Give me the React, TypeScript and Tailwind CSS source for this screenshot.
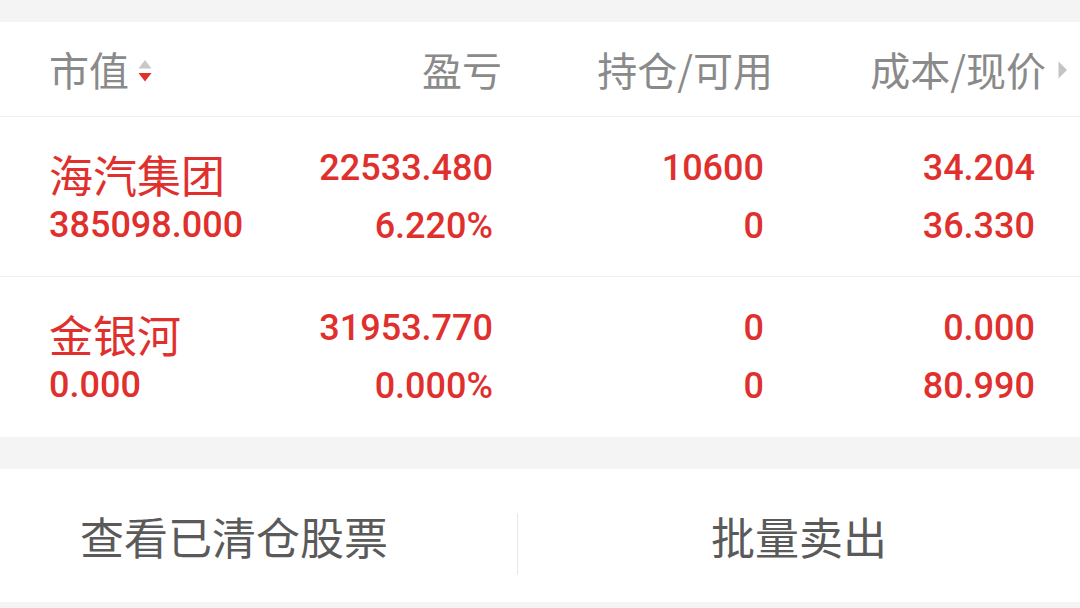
const CJK = "font-['Noto_Sans_CJK_SC',sans-serif]";
const NUM = "font-['Roboto','Noto_Sans_CJK_SC',sans-serif] text-[36px] font-medium";

type Holding = {
  name: string;
  value: string;
  pnl: string;
  pnlPct: string;
  qty: string;
  avail: string;
  cost: string;
  price: string;
};

const holdings: Holding[] = [
  { name: '海汽集团', value: '385098.000', pnl: '22533.480', pnlPct: '6.220%', qty: '10600', avail: '0', cost: '34.204', price: '36.330' },
  { name: '金银河', value: '0.000', pnl: '31953.770', pnlPct: '0.000%', qty: '0', avail: '0', cost: '0.000', price: '80.990' },
];

function SortIcon() {
  return (
    <svg width="16" height="28" viewBox="0 0 16 28" className="ml-[8px] mt-[4px]">
      <path d="M8 3 L14.5 11.5 L1.5 11.5 Z" fill="#c8c8c8" />
      <path d="M1.5 16 L14.5 16 L8 24.5 Z" fill="#e0302e" />
    </svg>
  );
}

function NumCell({ top, bottom, width }: { top: string; bottom: string; width: string }) {
  return (
    <div className={`${width} flex flex-col items-end pt-[22px] text-[#e0302e] ${NUM}`}>
      <div className="leading-[58px]">{top}</div>
      <div className="leading-[58px]">{bottom}</div>
    </div>
  );
}

export default function App() {
  return (
    <div className="w-[1080px] h-[608px] bg-[#f4f4f4] overflow-hidden pt-[22px]">
      <div className="bg-white">
        {/* 表头 */}
        <div className={`flex items-center h-[95px] pl-[49px] border-b border-[#f0f0f0] text-[40px] text-[#8a8a8a] ${CJK}`}>
          <div className="w-[200px] flex items-center">
            <span className="leading-[40px]">市值</span>
            <SortIcon />
          </div>
          <div className="w-[253px] text-right leading-[40px]">盈亏</div>
          <div className="w-[271px] text-right leading-[40px]">持仓/可用</div>
          <div className="w-[273px] text-right leading-[40px]">成本/现价</div>
          <svg width="10" height="18" viewBox="0 0 10 18" className="ml-[12px] mt-[2px]">
            <path d="M0.5 0.5 L9 9 L0.5 17.5 Z" fill="#c4c4c4" />
          </svg>
        </div>

        {holdings.map((h, i) => (
          <div
            key={h.name}
            className={`flex h-[160px] pl-[49px] ${i === 0 ? 'border-b border-[#f0f0f0]' : ''}`}
          >
            <div className="w-[200px] flex flex-col pt-[22px] text-[#e0302e]">
              <div className={`pt-[13px] text-[44px] leading-[44px] ${CJK}`}>{h.name}</div>
              <div className={`leading-[59px] ${NUM}`}>{h.value}</div>
            </div>
            <NumCell top={h.pnl} bottom={h.pnlPct} width="w-[244px]" />
            <NumCell top={h.qty} bottom={h.avail} width="w-[271px]" />
            <NumCell top={h.cost} bottom={h.price} width="w-[271px]" />
          </div>
        ))}
      </div>

      {/* 底部操作 */}
      <div className={`mt-[32px] h-[133px] bg-white flex items-center text-[44px] text-[#5a5a5a] ${CJK}`}>
        <div className="w-[517px] pl-[80px] leading-[44px]">查看已清仓股票</div>
        <div className="w-px h-[62px] bg-[#e6e6e6] mt-[16px]" />
        <div className="flex-1 text-center leading-[44px]">批量卖出</div>
      </div>
    </div>
  );
}
